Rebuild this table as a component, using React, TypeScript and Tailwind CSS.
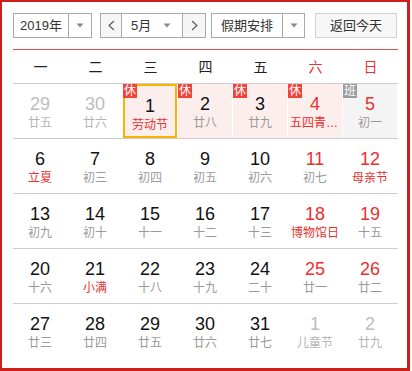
import React from "react";

type Cell = {
  d: string;
  l: string;
  numColor?: "black" | "red" | "gray";
  lunColor?: "gray" | "red" | "lgray";
  badge?: "休" | "班";
  selected?: boolean;
  truncate?: boolean;
};

const rows: Cell[][] = [
  [
    { d: "29", l: "廿五", numColor: "gray", lunColor: "lgray" },
    { d: "30", l: "廿六", numColor: "gray", lunColor: "lgray" },
    { d: "1", l: "劳动节", lunColor: "red", badge: "休", selected: true },
    { d: "2", l: "廿八", badge: "休" },
    { d: "3", l: "廿九", badge: "休" },
    { d: "4", l: "五四青年节", numColor: "red", lunColor: "red", badge: "休", truncate: true },
    { d: "5", l: "初一", numColor: "red", badge: "班" },
  ],
  [
    { d: "6", l: "立夏", lunColor: "red" },
    { d: "7", l: "初三" },
    { d: "8", l: "初四" },
    { d: "9", l: "初五" },
    { d: "10", l: "初六" },
    { d: "11", l: "初七", numColor: "red" },
    { d: "12", l: "母亲节", numColor: "red", lunColor: "red" },
  ],
  [
    { d: "13", l: "初九" },
    { d: "14", l: "初十" },
    { d: "15", l: "十一" },
    { d: "16", l: "十二" },
    { d: "17", l: "十三" },
    { d: "18", l: "博物馆日", numColor: "red", lunColor: "red" },
    { d: "19", l: "十五", numColor: "red" },
  ],
  [
    { d: "20", l: "十六" },
    { d: "21", l: "小满", lunColor: "red" },
    { d: "22", l: "十八" },
    { d: "23", l: "十九" },
    { d: "24", l: "二十" },
    { d: "25", l: "廿一", numColor: "red" },
    { d: "26", l: "廿二", numColor: "red" },
  ],
  [
    { d: "27", l: "廿三" },
    { d: "28", l: "廿四" },
    { d: "29", l: "廿五" },
    { d: "30", l: "廿六" },
    { d: "31", l: "廿七" },
    { d: "1", l: "儿童节", numColor: "gray", lunColor: "lgray" },
    { d: "2", l: "廿九", numColor: "gray", lunColor: "lgray" },
  ],
];

const Tri = () => (
  <svg width="8" height="5" viewBox="0 0 8 5">
    <polygon points="0.5,0.5 7.5,0.5 4,4.5" fill="#8a8a8a" />
  </svg>
);

const Chev = ({ dir }: { dir: "l" | "r" }) => (
  <svg width="7" height="11" viewBox="0 0 7 11">
    <polyline
      points={dir === "l" ? "6,1 1,5.5 6,10" : "1,1 6,5.5 1,10"}
      fill="none"
      stroke="#555"
      strokeWidth="1.1"
    />
  </svg>
);

function DayCell({ c }: { c: Cell }) {
  const numCls =
    c.numColor === "red"
      ? "text-[#e8312f]"
      : c.numColor === "gray"
      ? "text-[#bdbdbd]"
      : "text-[#111]";
  const lunCls =
    c.lunColor === "red"
      ? "text-[#e8312f]"
      : c.lunColor === "lgray"
      ? "text-[#b5b5b5]"
      : "text-[#9a9a9a]";
  const bg =
    c.badge === "休" ? "bg-[#fdeeee]" : c.badge === "班" ? "bg-[#f4f4f4]" : "";
  return (
    <div className="h-[54px] pr-[1px]">
      <div
        className={`relative h-full flex flex-col items-center pt-[11px] ${bg} ${
          c.selected ? "border-2 border-[#f8b500] pt-[9px]" : ""
        }`}
      >
        {c.badge && (
          <div
            className={`absolute ${c.selected ? "-left-[2px] -top-[2px]" : "left-0 top-0"} w-[14px] h-[14px] flex items-center justify-center text-[12px] leading-[14px] text-white ${
              c.badge === "休" ? "bg-[#f2433b]" : "bg-[#9b9b9b]"
            }`}
          >
            {c.badge}
          </div>
        )}
        <div className={`text-[18px] leading-[18px] h-[18px] ${numCls}`}>{c.d}</div>
        <div
          className={`mt-[3px] text-[12px] leading-[14px] h-[14px] whitespace-nowrap text-center ${lunCls} ${
            c.truncate ? "w-[50px] overflow-hidden text-ellipsis" : ""
          }`}
        >
          {c.l}
        </div>
      </div>
    </div>
  );
}

export default function App() {
  const week = ["一", "二", "三", "四", "五", "六", "日"];
  return (
    <div
      className="w-[410px] h-[371px] bg-white border-t-2 border-l-2 border-r-[3px] border-b-[3px] border-[#cf1f1b] pl-[11px] pt-[11px]"
      style={{ fontFamily: '"Liberation Sans", "Noto Sans CJK SC", sans-serif' }}
    >
      <div className="w-[385px]">
        {/* controls */}
        <div className="flex h-[25px] text-[13px] text-[#333]">
          <div className="w-[79px] h-[25px] flex border border-[#a9a9a9] bg-white">
            <div className="w-[54px] flex items-center justify-center leading-none">2019年</div>
            <div className="flex-1 border-l border-[#a9a9a9] flex items-center justify-center">
              <Tri />
            </div>
          </div>
          <div className="ml-[8px] w-[106px] h-[25px] flex border border-[#a9a9a9] bg-white">
            <div className="w-[21px] bg-[#f6f6f6] flex items-center justify-center border-r border-[#a9a9a9]">
              <Chev dir="l" />
            </div>
            <div className="w-[60px] flex items-center pl-[9px]">
              <span className="leading-none">5月</span>
              <span className="ml-[12px] flex items-center">
                <Tri />
              </span>
            </div>
            <div className="flex-1 bg-[#f6f6f6] flex items-center justify-center border-l border-[#a9a9a9]">
              <Chev dir="r" />
            </div>
          </div>
          <div className="ml-[5px] w-[94px] h-[25px] flex border border-[#a9a9a9] bg-white">
            <div className="w-[70px] flex items-center justify-center leading-none">假期安排</div>
            <div className="flex-1 border-l border-[#a9a9a9] flex items-center justify-center">
              <Tri />
            </div>
          </div>
          <div className="ml-[10px] w-[82px] h-[25px] flex items-center justify-center border border-[#d3d3d3] bg-[#f7f7f7] leading-none">
            返回今天
          </div>
        </div>
        {/* red line */}
        <div className="mt-[11px] h-[1px] bg-[#e0504c]" />
        {/* week header */}
        <div className="grid grid-cols-7 h-[34px] border-b border-[#cccccc] text-[14px]">
          {week.map((w, i) => (
            <div
              key={w}
              className={`flex items-center justify-center leading-none ${
                i >= 5 ? "text-[#e8312f]" : "text-[#222]"
              }`}
            >
              {w}
            </div>
          ))}
        </div>
        {rows.map((r, ri) => (
          <div
            key={ri}
            className={`grid grid-cols-7 ${ri < rows.length - 1 ? "border-b border-[#cccccc]" : ""}`}
          >
            {r.map((c, ci) => (
              <DayCell key={ci} c={c} />
            ))}
          </div>
        ))}
      </div>
    </div>
  );
}
